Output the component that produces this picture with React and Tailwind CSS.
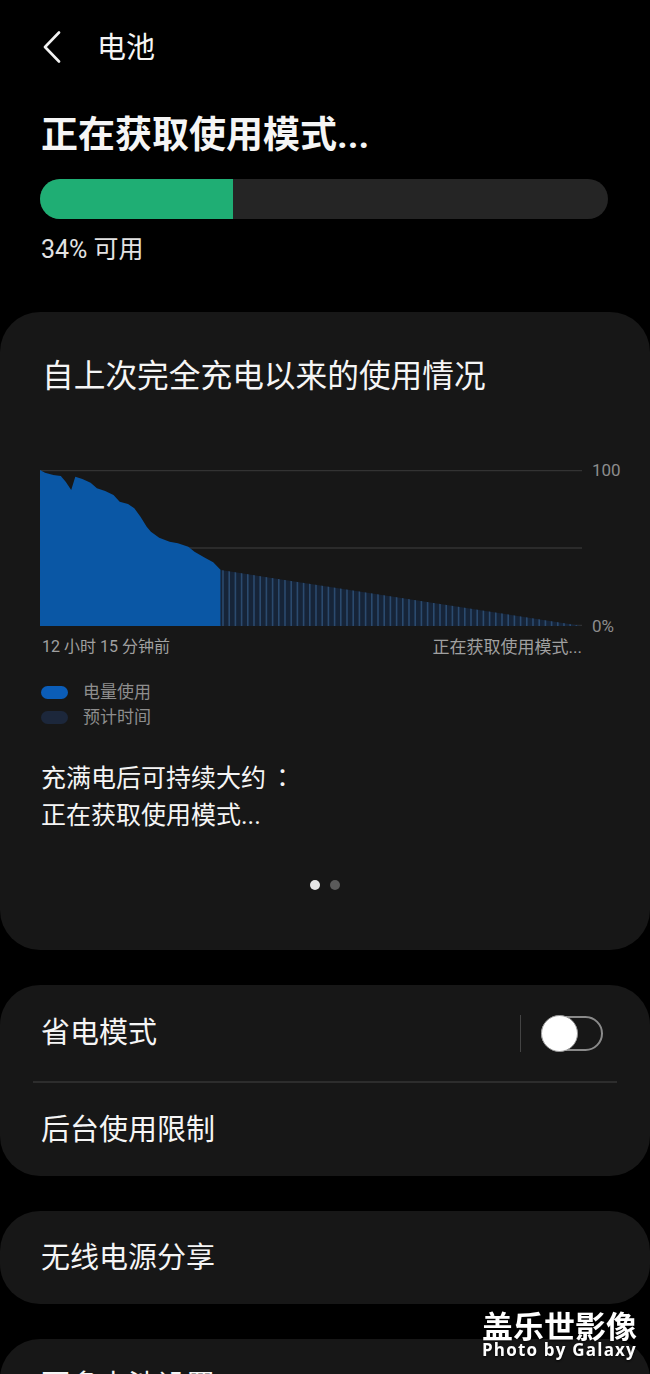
import React from 'react';

const blueArea = [
  [0, 0], [5, 2.7], [13.3, 5], [20.8, 6], [25.7, 11.7], [31.2, 20], [35.3, 6.7],
  [42.4, 9], [50.6, 12.7], [56.9, 18.3], [65.2, 21], [73.5, 25], [79.7, 31.7],
  [88, 34], [94.3, 38.3], [100.5, 46.7], [106.7, 56.7], [110.9, 61.7], [119.2, 67.7],
  [129.6, 71.7], [137.9, 73.3], [148.3, 76.7], [154.5, 81.7], [164.9, 87.7],
  [173.2, 92.3], [180.7, 100],
];

const hatch = [];
for (let x = 183; x < 542; x += 6.2) hatch.push(x);

const UsageChart = () => {
  const pts = blueArea.map((p) => p.join(',')).join(' ') + ' 180.7,156 0,156';
  return (
    <svg width="542" height="156" viewBox="0 0 542 156">
      <defs>
        <clipPath id="future">
          <polygon points="180.7,100 542,156 180.7,156" />
        </clipPath>
      </defs>
      <line x1="0" y1="0.5" x2="542" y2="0.5" stroke="#333" strokeWidth="1.5" />
      <line x1="0" y1="78" x2="542" y2="78" stroke="#333" strokeWidth="1.5" />
      <line x1="0" y1="155.5" x2="542" y2="155.5" stroke="#333" strokeWidth="1.5" />
      <polygon points={pts} fill="#0a57a5" />
      <g clipPath="url(#future)">
        <rect x="180" y="90" width="362" height="66" fill="#162438" />
        {hatch.map((x) => (
          <line key={x} x1={x} y1="90" x2={x} y2="156" stroke="#2b4a6e" strokeWidth="1.6" />
        ))}
      </g>
    </svg>
  );
};

const Card = ({ children, className = '' }) => (
  <div className={`bg-[#171717] rounded-[40px] ${className}`}>{children}</div>
);

export default function App() {
  return (
    <div className="relative w-[650px] h-[1374px] overflow-hidden bg-black text-[#f5f5f5] font-['Roboto','Noto_Sans_CJK_SC',sans-serif]">
      {/* header */}
      <div className="flex items-center h-[96px] pl-[42px]">
        <svg width="20" height="32" viewBox="0 0 20 32" className="mb-[2px]">
          <path d="M17 1.5 L3 16 L17 30.5" fill="none" stroke="#f2f2f2" strokeWidth="2.6" strokeLinecap="round" strokeLinejoin="round" />
        </svg>
        <span className="ml-[35px] text-[29px] leading-[36px]">电池</span>
      </div>

      <div className="px-[40px]">
        <div className="text-[37px] leading-[44px] font-bold mt-[18px] ml-[1px]">正在获取使用模式...</div>
        <div className="mt-[21px] w-[568px] h-[40px] rounded-full bg-[#252525] overflow-hidden">
          <div className="h-full w-[34%] bg-[#1fae74]" />
        </div>
        <div className="mt-[16px] ml-[1px] text-[25px] leading-[30px] text-[#e3e3e3]">34% 可用</div>
      </div>

      <div className="mt-[47px] flex flex-col gap-[35px]">
        <Card className="pl-[40px] pt-[47px] pb-[60px]">
          <div className="text-[31.7px] leading-[36px] ml-[2px]">自上次完全充电以来的使用情况</div>

          <div className="mt-[75px] flex items-start">
            <UsageChart />
            <div className="ml-[10px] h-[156px] flex flex-col justify-between text-[17px] leading-[20px] text-[#8c8c8c]">
              <span className="-mt-[10px]">100</span>
              <span className="-mb-[10px]">0%</span>
            </div>
          </div>
          <div className="mt-[10px] w-[542px] flex justify-between text-[16px] leading-[22px] text-[#a0a0a0]">
            <span className="ml-[2px]">12 小时 15 分钟前</span>
            <span className="text-[17px]">正在获取使用模式...</span>
          </div>

          <div className="mt-[22px] flex flex-col text-[17px] leading-[25px] text-[#8e8e8e]">
            <div className="flex items-center">
              <span className="w-[27px] h-[13px] rounded-full bg-[#0b5db8] ml-[1px]" />
              <span className="ml-[15px]">电量使用</span>
            </div>
            <div className="flex items-center">
              <span className="w-[27px] h-[13px] rounded-full bg-[#1c273b] ml-[1px]" />
              <span className="ml-[15px]">预计时间</span>
            </div>
          </div>

          <div className="mt-[28px] ml-[1px] text-[25px] leading-[37px]">
            <div>充满电后可持续大约<span className="ml-[4px] font-['Noto_Sans_CJK_JP',sans-serif]">：</span></div>
            <div>正在获取使用模式...</div>
          </div>

          <div className="mt-[46px] flex justify-center gap-[10px] -ml-[40px]">
            <span className="w-[10px] h-[10px] rounded-full bg-[#e6e6e6]" />
            <span className="w-[10px] h-[10px] rounded-full bg-[#5a5a5a]" />
          </div>
        </Card>

        <Card>
          <div className="h-[96px] flex items-center pl-[41px] pr-[47px]">
            <span className="flex-1 text-[29px] leading-[36px]">省电模式</span>
            <span className="w-[1px] h-[37px] bg-[#444]" />
            <div className="ml-[20px] relative w-[62px] h-[35px] rounded-full border-2 border-[#8a8a8a]">
              <span className="absolute -left-[2px] -top-[3px] w-[37px] h-[37px] rounded-full bg-white border border-[#9a9a9a]" />
            </div>
          </div>
          <div className="mx-[33px] h-[2px] bg-[#2d2d2d]" />
          <div className="h-[93px] flex items-center pl-[41px]">
            <span className="text-[29px] leading-[36px]">后台使用限制</span>
          </div>
        </Card>

        <Card>
          <div className="h-[93px] flex items-center pl-[41px]">
            <span className="text-[29px] leading-[36px]">无线电源分享</span>
          </div>
        </Card>

        <Card>
          <div className="h-[93px] flex items-center pl-[41px]">
            <span className="text-[29px] leading-[36px]">更多电池设置</span>
          </div>
        </Card>
      </div>

      {/* watermark */}
      <div className="absolute right-[13px] top-[1308px] flex flex-col items-end text-white font-bold drop-shadow-[0_1px_1px_rgba(0,0,0,0.8)]">
        <span className="text-[31px] leading-[33px] font-['Noto_Sans_CJK_SC',sans-serif]">盖乐世影像</span>
        <span className="text-[17px] leading-[18px] tracking-[1.2px] font-['Open_Sans','Noto_Sans',sans-serif]">Photo by Galaxy</span>
      </div>
    </div>
  );
}
